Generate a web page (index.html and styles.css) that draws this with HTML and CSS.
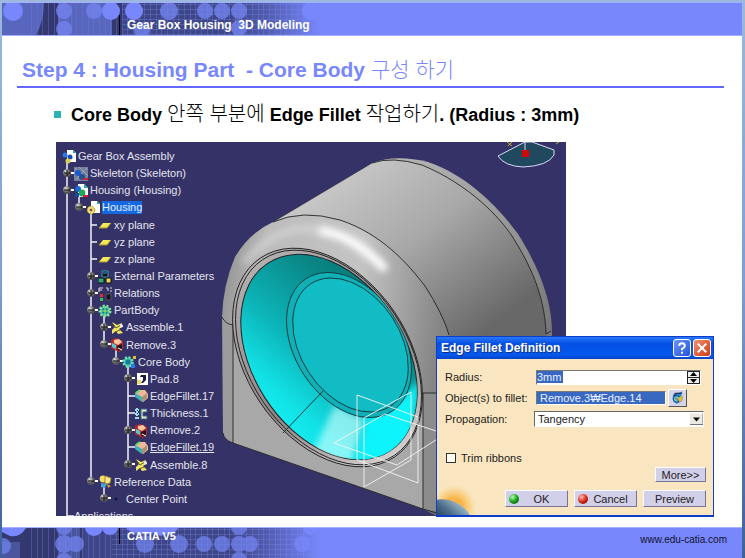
FILE: index.html
```html
<!DOCTYPE html>
<html lang="ko">
<head>
<meta charset="utf-8">
<title>Gear Box Housing 3D Modeling</title>
<link rel="stylesheet" href="styles.css">
</head>
<body>
<svg class="defs" aria-hidden="true">
  <defs>
    <linearGradient id="fade"><stop offset="0" stop-color="#7888fc" stop-opacity="0"/><stop offset=".4" stop-color="#7888fc" stop-opacity=".35"/><stop offset="1" stop-color="#7888fc"/></linearGradient>
    <pattern id="vlines" width="17" height="32" patternUnits="userSpaceOnUse"><path d="M1.5 0V32M6.5 0V32M12.5 0V32" stroke="#7080e8" stroke-opacity=".35"/></pattern>
    <pattern id="hlines" width="20" height="5" patternUnits="userSpaceOnUse"><path d="M0 1.5H20" stroke="#8090f0" stroke-opacity=".3"/></pattern>
    <symbol id="asm" viewBox="0 0 14 14"><path d="M5 0h6l3 3v9H5z" fill="#fff"/><path d="M11 0v3h3z" fill="#2aa"/><circle cx="3" cy="5" r="2.5" fill="#2878e8"/><circle cx="8" cy="7" r="2.5" fill="#1848b0"/><circle cx="6" cy="11" r="2.5" fill="#d8d050"/></symbol>
    <symbol id="skel" viewBox="0 0 14 14"><path d="M0 0h14v14H0z" fill="#77809c"/><path d="M1 1l12 12M5 0l9 9M0 5l8 8M13 1L2 13" stroke="#b8bed0" stroke-dasharray="1 1"/><circle cx="4" cy="6" r="3" fill="#1858d0"/><circle cx="8" cy="10" r="3" fill="#205090"/><path d="M9 11h5v2H9z" fill="#d02030"/></symbol>
    <symbol id="prod" viewBox="0 0 14 14"><path d="M4 0h6l4 4v9H4z" fill="#fff"/><path d="M10 0v4h4z" fill="#2aa"/><circle cx="4" cy="5" r="3" fill="#1868d8"/><circle cx="8" cy="9" r="3.4" fill="#20a858"/><path d="M1 9h4v4H1z" fill="#1848a0"/><path d="M9 11h5v2H9z" fill="#d02030"/></symbol>
    <symbol id="part" viewBox="0 0 14 14"><path d="M5 0h6l3 3v9H5z" fill="#fff"/><path d="M11 0v3h3z" fill="#2aa"/><circle cx="5" cy="9" r="3.8" fill="#f0dc70" stroke="#b09828" stroke-dasharray="2 1"/><circle cx="5" cy="9" r="1.3" fill="#745"/></symbol>
    <symbol id="plane" viewBox="0 0 14 14"><path d="M1 10L5 5h8l-4 5z" fill="#f2e85c"/><path d="M1 10h8l4-5" fill="none" stroke="#a39420"/></symbol>
    <symbol id="param" viewBox="0 0 14 14"><path d="M4 1h6v6H4z" fill="#111" stroke="#38a0b8"/><path d="M0 8h6v5H0z" fill="#37a878" stroke="#111"/><path d="M8 8h5v5H8z" fill="#e4d858" stroke="#111"/><path d="M5 3h4" stroke="#38a0ff"/></symbol>
    <symbol id="rel" viewBox="0 0 14 14"><path d="M1 1h4M1 1v4M1 3h3M8 1h2v3M12 1h2M12 4h2" stroke="#ddd" fill="none"/><path d="M2 7h3v3H2z" fill="#e03030"/><path d="M2 11h3v3H2z" fill="#30c050"/><path d="M8 7h5v6H8z" fill="#15151f" stroke="#556"/></symbol>
    <symbol id="gear" viewBox="0 0 14 14"><circle cx="7" cy="7" r="5.2" fill="#3cc49c" stroke="#8fe0a0" stroke-width="2.6" stroke-dasharray="2 1.6"/><circle cx="7" cy="7" r="3" fill="#1878a0"/><path d="M7 3v8M3 7h8" stroke="#9af060"/></symbol>
    <symbol id="core" viewBox="0 0 14 14"><circle cx="6" cy="7" r="4.6" fill="#3cc49c" stroke="#6fe0b8" stroke-width="2.4" stroke-dasharray="2 1.6"/><circle cx="6" cy="7" r="2.5" fill="#1878a0"/><path d="M11 1h3v3h-3z" fill="#f0b830"/><path d="M9 9h4v4H9z" fill="#2878e8"/></symbol>
    <symbol id="assem" viewBox="0 0 14 14"><path d="M2 1l5 3 5-2v4l-3 2 4 4-5 1-2-3-4 3V9l3-3z" fill="#f0e468"/><path d="M3 3l3 4 5-3M5 11l5-2" stroke="#665d28" fill="none"/><path d="M10 3l3 1v2l-3 1z" fill="#e8e8e8"/></symbol>
    <symbol id="remove" viewBox="0 0 14 14"><path d="M1 2l5-2 7 3v8l-4 3-8-4z" fill="#c02828"/><path d="M4 2l5-1 3 3-4 3-4-2z" fill="#f6c8a0"/><path d="M2 5l4 2v4L2 9z" fill="#55c8d0"/><path d="M7 8l5-2v5l-4 2z" fill="#201420"/><path d="M8 10l4 2" stroke="#fff"/></symbol>
    <symbol id="pad" viewBox="0 0 14 14"><path d="M3 1h11v12H3z" fill="#fff"/><path d="M7 3h5v5l-3 3H7l2-3V5H6z" fill="#1a1a3a"/><path d="M3 8h4v4H3z" fill="#e8d870"/></symbol>
    <symbol id="fillet" viewBox="0 0 14 14"><path d="M1 4l4-3h6l3 4v4l-5 4-8-6z" fill="#efb69a"/><path d="M1 4l7 4v5L1 8z" fill="#3fb0b8"/><path d="M2 4l4-3" stroke="#58e070" stroke-width="2"/><path d="M8 8l5-4v5l-5 4z" fill="#a89470"/></symbol>
    <symbol id="thick" viewBox="0 0 14 14"><path d="M3 1v12M1 3h4M1 7h4M1 11h4" stroke="#9adce8" stroke-width="2" stroke-dasharray="2 1"/><path d="M7 2h6v3H9v4h4v3H7z" fill="#e8eca8" stroke="#38609c"/></symbol>
    <symbol id="ref" viewBox="0 0 14 14"><circle cx="5" cy="4" r="3.4" fill="#f3dc68"/><path d="M7 1l6 2-1 5-5 1z" fill="#f8e98c" stroke="#a8842c"/><path d="M3 8l6 1-2 4-4-1z" fill="#48a0d8"/><path d="M9 9l4 2-3 2z" fill="#d89838"/></symbol>
    <symbol id="dot" viewBox="0 0 14 14"><circle cx="6" cy="7" r="1.3" fill="#12123c"/></symbol>
  </defs>
</svg>

<div class="slide">
  <header class="band band-top">
    <svg class="texture" viewBox="0 0 373 32" aria-hidden="true">
      <path d="M0 0H320V32H0z" fill="#33386e"/>
      <path d="M0 0H42Q42 18 34 32H0zM56 0H110V32H56z" fill="#5966bd"/>
      <path d="M120 0H320V32H120z" fill="#4a549f" opacity=".5"/>
      <path d="M24 0H320V32H24z" fill="url(#vlines)"/><path d="M120 0H320V32H120z" fill="url(#hlines)"/>
      <g fill="#7383ee" opacity=".8"><circle cx="62" cy="8" r="8"/><circle cx="62" cy="26" r="8"/><circle cx="92" cy="8" r="8"/><circle cx="167" cy="8" r="9"/><circle cx="203" cy="8" r="8"/><circle cx="220" cy="8" r="8"/><circle cx="237" cy="8" r="8"/><circle cx="237" cy="25" r="8"/><circle cx="140" cy="27" r="8"/></g>
      <path d="M230 0H320V32H230z" fill="url(#fade)"/>
      <g fill="#7888fc"><circle cx="11" cy="8" r="10"/><circle cx="109" cy="8" r="9"/><circle cx="132" cy="8" r="9"/><circle cx="309" cy="8" r="9"/></g>
    </svg>
    <p class="band-title">Gear Box Housing&nbsp; 3D Modeling</p>
  </header>

  <main>
    <h1>Step 4 : Housing Part&nbsp; - Core Body <span class="ko">구성 하기</span></h1>
    <ul class="points"><li>Core Body <span class="ko">안쪽 부분에</span> Edge Fillet <span class="ko">작업하기</span>. (Radius : 3mm)</li></ul>

    <div class="shot">
      <div class="viewport">
        <svg class="scene" viewBox="56 142 510 374" role="img" aria-label="Housing model">
          <defs>
            <linearGradient id="body" gradientUnits="userSpaceOnUse" x1="350" y1="170" x2="480" y2="335"><stop offset="0" stop-color="#c6c6c6"/><stop offset=".45" stop-color="#a8a8a8"/><stop offset="1" stop-color="#686868"/></linearGradient>
            <linearGradient id="rim" gradientUnits="userSpaceOnUse" x1="400" y1="160" x2="550" y2="330"><stop offset="0" stop-color="#b4b4b4"/><stop offset=".5" stop-color="#999"/><stop offset="1" stop-color="#767676"/></linearGradient>
            <linearGradient id="front" gradientUnits="userSpaceOnUse" x1="225" y1="300" x2="440" y2="330"><stop offset="0" stop-color="#999"/><stop offset=".15" stop-color="#bbb"/><stop offset=".6" stop-color="#c4c4c4"/><stop offset="1" stop-color="#858585"/></linearGradient>
            <linearGradient id="wall" gradientUnits="userSpaceOnUse" x1="300" y1="265" x2="350" y2="455"><stop offset="0" stop-color="#087878"/><stop offset=".2" stop-color="#0a8585"/><stop offset=".55" stop-color="#0cb4b8"/><stop offset=".8" stop-color="#12e2e6"/><stop offset="1" stop-color="#14f4fa"/></linearGradient>
            <linearGradient id="ring" x2="1"><stop offset="0" stop-color="#b4b0b0"/><stop offset=".6" stop-color="#8d8585"/><stop offset="1" stop-color="#d4d0d0"/></linearGradient>
            <filter id="soft" x="-50%" y="-50%" width="200%" height="200%"><feGaussianBlur stdDeviation="3.5"/></filter>
            <clipPath id="hole"><ellipse cx="329" cy="357" rx="112" ry="76" transform="rotate(57 329 357)"/></clipPath>
            <radialGradient id="knob" cx=".35" cy=".3"><stop offset="0" stop-color="#ddd"/><stop offset="1" stop-color="#555"/></radialGradient>
            <g id="minus"><circle r="4" fill="url(#knob)"/><path d="M-3 0H3" stroke="#111"/><path d="M4 0H7" stroke="#fff" stroke-width="2"/></g>
            <g id="plus"><circle r="4" fill="url(#knob)"/><path d="M-3 0H3M0-3V3" stroke="#111"/><path d="M4 0H7" stroke="#fff" stroke-width="2"/></g>
          </defs>
          <path d="M56 142h510v374H56z" fill="#343266"/>
          <path d="M372 163Q395 154 428 162C470 176 502 212 518 234C542 272 552 305 552 332V516H437L423 509L372 300z" fill="url(#rim)"/>
          <path d="M273 222L372 163Q392 156 422 165C470 185 500 218 512 236C535 272 545 302 547 340V516H440L423 509L273 250z" fill="url(#body)"/>
          <path d="M222 317Q223 285 235 257Q249 233 273 222Q302 209 340 220C382 234 408 264 425 286Q443 314 449 335V514L423 509L233 443Q224 440 223 433z" fill="url(#front)"/>
          <path d="M223 317L233 325V443Q224 440 223 433z" fill="#9c9c9c"/>
          <path d="M423 393H449V514L423 509z" fill="#8c8c8c"/>
          <path d="M233 325L423 393V509L233 443z" fill="#a8a8a8"/>
          <path d="M322 231Q352 235 383 267" fill="none" stroke="#fff" stroke-width="9" stroke-linecap="round" filter="url(#soft)"/>
          <path d="M244 263Q280 220 322 231" fill="none" stroke="#ddd" stroke-width="7" opacity=".6" filter="url(#soft)"/>
          <g fill="none" stroke="#222" stroke-width=".9">
            <path d="M273 222Q302 209 340 220C382 234 408 264 425 286Q443 314 449 335"/>
            <path d="M372 163Q392 156 422 165C470 185 500 218 512 236C535 272 545 302 546 334L551 331"/>
            <path d="M273 222L372 163" opacity=".6"/>
            <path d="M222 317Q225 324 233 325V443L423 509V393H437M423 509L440 514M223 433Q224 440 233 443"/>
            <ellipse cx="327.500" cy="357.500" rx="120" ry="81" transform="rotate(56 327.500 357.500)" fill="url(#ring)"/>
            <ellipse cx="328.500" cy="357.500" rx="118" ry="79" transform="rotate(56 328.500 357.500)"/>
          </g>
          <ellipse cx="329" cy="357" rx="112" ry="76" transform="rotate(57 329 357)" fill="url(#wall)" stroke="#222"/>
          <g clip-path="url(#hole)">
            <path d="M335 405L312 455L350 465L366 420z" fill="#c8ffff" opacity=".65" filter="url(#soft)"/>
            <path d="M366 418L355 465L410 455L420 380L405 395z" fill="#10f4fc" filter="url(#soft)"/>
            <g stroke="#123c40" stroke-width=".9">
              <ellipse cx="349" cy="345" rx="79" ry="54" transform="rotate(57 349 345)" fill="#10b0b6"/>
              <ellipse cx="350.500" cy="345" rx="73" ry="50" transform="rotate(57 350.500 345)" fill="#12bcc4"/>
            </g>
          </g>
          <path d="M323 391L283 433" stroke="#123c40"/>
          <path d="M357 395L418 417V483L357 460zM364 418L411 392V460L364 487zM334 443L385 414L445 434L397 465z" fill="none" stroke="#f4f4f4" stroke-width=".9"/>
          <path d="M525 142L498 156Q504 166 523 167Q548 166 554 155V150L532 142z" fill="#20485e" stroke="#dcd8f8"/>
          <path d="M525 142V152" stroke="#dcd8f8"/><path d="M522 150h7v7h-7z" fill="#d00808"/>
          <path d="M507 142l5 4M512 142l-4 4M556 144l3-2" stroke="#b8b038"/>
          <path d="M67 161V516H74M79 194V207M91 212V481M91 225H97M91 242H97M91 259H97M104 315V345M116 349V362M128 366V464M128 396H135M128 413H135M128 447H135M104 486V499" fill="none" stroke="#f2f2f8" stroke-width="1.500"/>
          <use href="#plus" x="67" y="173"/><use href="#minus" x="67" y="190"/><use href="#minus" x="79" y="207"/>
          <use href="#plus" x="91" y="276"/><use href="#plus" x="91" y="293"/><use href="#minus" x="91" y="310"/>
          <use href="#plus" x="104" y="327"/><use href="#minus" x="104" y="344"/><use href="#minus" x="116" y="361"/>
          <use href="#plus" x="128" y="378"/><use href="#plus" x="128" y="430"/><use href="#plus" x="128" y="464"/>
          <use href="#minus" x="91" y="481"/><use href="#plus" x="104" y="498"/>
        </svg>
        <ul class="tree">
          <li class="l0"><svg><use href="#asm"/></svg>Gear Box Assembly</li>
          <li class="l1"><svg><use href="#skel"/></svg>Skeleton (Skeleton)</li>
          <li class="l1"><svg><use href="#prod"/></svg>Housing (Housing)</li>
          <li class="l2"><svg><use href="#part"/></svg><mark>Housing</mark></li>
          <li class="l3"><svg><use href="#plane"/></svg>xy plane</li>
          <li class="l3"><svg><use href="#plane"/></svg>yz plane</li>
          <li class="l3"><svg><use href="#plane"/></svg>zx plane</li>
          <li class="l3"><svg><use href="#param"/></svg>External Parameters</li>
          <li class="l3"><svg><use href="#rel"/></svg>Relations</li>
          <li class="l3"><svg><use href="#gear"/></svg>PartBody</li>
          <li class="l4"><svg><use href="#assem"/></svg>Assemble.1</li>
          <li class="l4"><svg><use href="#remove"/></svg>Remove.3</li>
          <li class="l5"><svg><use href="#core"/></svg>Core Body</li>
          <li class="l6"><svg><use href="#pad"/></svg>Pad.8</li>
          <li class="l6"><svg><use href="#fillet"/></svg>EdgeFillet.17</li>
          <li class="l6"><svg><use href="#thick"/></svg>Thickness.1</li>
          <li class="l6"><svg><use href="#remove"/></svg>Remove.2</li>
          <li class="l6"><svg><use href="#fillet"/></svg><u>EdgeFillet.19</u></li>
          <li class="l6"><svg><use href="#assem"/></svg>Assemble.8</li>
          <li class="l3"><svg><use href="#ref"/></svg>Reference Data</li>
          <li class="l4"><svg><use href="#dot"/></svg>Center Point</li>
          <li class="l1">Applications</li>
        </ul>
      </div>

      <form class="dialog" aria-labelledby="dlg">
        <div class="titlebar">
          <h2 id="dlg">Edge Fillet Definition</h2>
          <button type="button" class="tb help" aria-label="Help"><svg viewBox="0 0 17 17"><path d="M5.500 6.500Q5.500 3.500 8.500 3.500T11.500 6.500Q11.500 8 8.500 9.500V11M8.500 12.500V14.500" fill="none" stroke="#fff" stroke-width="2"/></svg></button>
          <button type="button" class="tb close" aria-label="Close"><svg viewBox="0 0 17 17"><path d="M4 4l9 9M13 4l-9 9" stroke="#fff" stroke-width="2"/></svg></button>
        </div>
        <div class="fields">
          <label for="radius">Radius:</label>
          <div class="spin"><input id="radius" type="text" value="3mm" size="3"><button type="button" aria-label="Step radius"><svg viewBox="0 0 13 13"><path d="M0 0h13v13H0z" fill="#222"/><path d="M1 1h11v5H1zM1 7h11v5H1z" fill="#eee"/><path d="M6.500 1L10 5H3zM6.500 12L10 8H3z" fill="#000"/></svg></button></div>
          <label for="objects">Object(s) to fillet:</label>
          <div class="pick"><input id="objects" type="text" value="Remove.3₩Edge.14" readonly><button type="button" aria-label="Edit selection"><svg viewBox="0 0 18 16"><path d="M4 6Q5 2 9 3L14 1L13 4Q16 8 13 12L8 14Q3 12 4 6z" fill="#2888d0"/><circle cx="8" cy="9" r="3.500" fill="#58c8c0" stroke="#183c90"/><path d="M6 3h8M5 5h3" stroke="#113"/><path d="M10 8l4-3v5l-3 3z" fill="#e8b828"/><path d="M7 8l3 3" stroke="#d02828"/></svg></button></div>
          <label for="prop">Propagation:</label>
          <div class="choose"><select id="prop"><option>Tangency</option></select><svg viewBox="0 0 13 11" aria-hidden="true"><path d="M0 0h13v11H0z" fill="#ece9e0"/><path d="M13 0v11H0" fill="none" stroke="#777"/><path d="M3 4h7L6.500 8z"/></svg></div>
        </div>
        <label class="trim"><input type="checkbox">Trim ribbons</label>
        <div class="row"><button type="button" class="btn more">More&gt;&gt;</button></div>
        <div class="row"><button type="button" class="btn"><i class="led green"></i><span>OK</span></button><button type="button" class="btn"><i class="led red"></i><span>Cancel</span></button><button type="button" class="btn"><span>Preview</span></button></div>
        <svg class="planet" viewBox="0 0 40 34" aria-hidden="true"><defs><radialGradient id="glow"><stop offset=".4" stop-color="#f8a828" stop-opacity=".8"/><stop offset="1" stop-color="#f8c050" stop-opacity="0"/></radialGradient><linearGradient id="globe" x1=".7" y1="0" x2=".3" y2="1"><stop offset="0" stop-color="#9fb8c8"/><stop offset=".4" stop-color="#4a6c88"/><stop offset="1" stop-color="#101c30"/></linearGradient></defs><circle cx="17" cy="26" r="22" fill="url(#glow)"/><ellipse cx="12" cy="36" rx="24" ry="16" transform="rotate(25 12 36)" fill="url(#globe)"/></svg>
      </form>
    </div>
  </main>

  <footer class="band band-bottom">
    <svg class="texture" viewBox="0 0 373 32" aria-hidden="true">
      <path d="M0 0H320V32H0z" fill="#33386e"/>
      <path d="M0 14H18V32H0zM56 0H78V32H56z" fill="#4a559f"/>
      <path d="M80 0H320V32H80z" fill="#4a549f" opacity=".5"/>
      <path d="M24 0H320V32H24z" fill="url(#vlines)"/><path d="M110 0H320V32H110z" fill="url(#hlines)"/>
      <g fill="#7383ee" opacity=".75"><circle cx="1" cy="18" r="8"/><circle cx="62" cy="-1" r="8"/><circle cx="62" cy="16" r="9"/><circle cx="74" cy="16" r="8"/><circle cx="62" cy="33" r="8"/><circle cx="143" cy="16" r="9"/><circle cx="177" cy="16" r="9"/><circle cx="202" cy="16" r="8"/><circle cx="220" cy="16" r="8"/><circle cx="237" cy="-1" r="8"/><circle cx="237" cy="16" r="8"/><circle cx="248" cy="16" r="8"/><circle cx="237" cy="32" r="8"/><circle cx="300" cy="16" r="8"/></g>
      <path d="M230 0H320V32H230z" fill="url(#fade)"/>
      <g fill="#7888fc"><path d="M0 0H24Q18 10 8 8L0 4z"/><circle cx="92" cy="-1" r="9"/><circle cx="108" cy="-1" r="8"/><path d="M124 0h52q-4 8-12 6-6 4-12-1-20 4-28-5z"/><circle cx="309" cy="-1" r="8"/></g>
    </svg>
    <p class="band-title">CATIA V5</p>
    <a href="#">www.edu-catia.com</a>
  </footer>
</div>
</body>
</html>
```
FILE: styles.css
```css
* { box-sizing: border-box; }

body {
  margin: 0;
  min-height: 100vh;
  padding: 2px 3px 0 2px;
  background: linear-gradient(#9cb8dc, #7ca0d0 50%, #3c6098);
  font-family: "Liberation Sans", "Noto Sans CJK KR", sans-serif;
  display: flex;
}

h1, h2, p, ul { margin: 0; padding: 0; }
ul { list-style: none; }
.defs { position: absolute; width: 0; height: 0; }

.slide {
  flex: 1;
  background: #fff;
  display: flex;
  flex-direction: column;
}

.ko {
  font-family: "Noto Sans CJK KR", sans-serif;
  font-weight: 300;
  line-height: 1;
}

/* Header and footer bands */
.band {
  position: relative;
  display: flex;
  background: #7888fc;
  color: #fff;
  border-top: 1px solid #a4b0ff;
  padding-left: 117px;
  overflow: hidden;
}
.band-top { height: 34px; border-bottom: 1px solid #a4b0ff; align-items: flex-end; }
.band-bottom { height: 31px; align-items: flex-start; justify-content: space-between; }
.texture { position: absolute; left: 0; top: 0; width: 373px; height: 32px; }
.band-title {
  position: relative;
  padding-left: 7px;
  border-left: 1px solid #000;
  font-size: 12px;
  font-weight: bold;
  line-height: 20px;
}
.band-bottom .band-title { font-size: 11px; line-height: 16px; }
.band a {
  position: relative;
  padding: 4px 15px 0 0;
  color: #101030;
  font-size: 10px;
  line-height: 16px;
  text-decoration: none;
}

/* Slide content */
main { flex: 1; }
h1 {
  margin: 18px 18px 0 15px;
  padding: 0 5px;
  border-bottom: 2px solid #6468fa;
  color: #7888fc;
  font-size: 21px;
  line-height: 32px;
  white-space: nowrap;
}
.points li {
  margin: 14px 0 0 52px;
  font-size: 18px;
  font-weight: bold;
  line-height: 26px;
  white-space: nowrap;
}
.points .ko { font-size: 20px; }
.points li::before {
  content: "";
  display: inline-block;
  width: 7px;
  height: 7px;
  margin-right: 10px;
  background: #2cb4b4;
  vertical-align: 3px;
}

.shot { position: relative; width: 658px; margin: 14px 0 0 54px; }
.viewport { position: relative; width: 510px; height: 374px; overflow: hidden; }
.scene { display: block; width: 100%; height: 100%; }

/* Specification tree */
.tree {
  position: absolute;
  inset: 6px auto auto 0;
  height: 377px;
  display: grid;
  grid-auto-rows: minmax(0, 1fr);
  color: #e4e4ee;
  font-size: 11px;
  line-height: 17px;
  white-space: nowrap;
}
.tree li { display: flex; align-items: center; gap: 2px; }
.tree svg { width: 14px; height: 14px; }
.tree mark { background: #1668e0; color: #e4eeff; line-height: 13px; }
.l0 { padding-left: 6px; }
.l1 { padding-left: 18px; }
.l2 { padding-left: 30px; }
.l3 { padding-left: 42px; }
.l4 { padding-left: 54px; }
.l5 { padding-left: 66px; }
.l6 { padding-left: 78px; }

/* Dialog */
.dialog {
  position: absolute;
  left: 380px;
  top: 194px;
  width: 278px;
  border: 1px solid #0c3cc8;
  border-bottom-width: 2px;
  background: #f9e6c0;
  color: #222;
  font-size: 11px;
}
.dialog input, .dialog select, .dialog button { font: inherit; color: inherit; margin: 0; }
.titlebar {
  display: flex;
  align-items: center;
  gap: 2px;
  height: 22px;
  padding: 0 2px 0 4px;
  background: linear-gradient(#2878f8, #0450e4 30%, #0458ee 80%, #0444c8);
  color: #fff;
}
.titlebar h2 { flex: 1; font-size: 12px; text-shadow: 1px 1px #103080; }
.tb { width: 18px; height: 18px; padding: 0; border: 1px solid #fff; border-radius: 3px; }
.tb svg { display: block; width: 16px; height: 16px; }
.help { background: linear-gradient(135deg, #6c94f4, #2454d8); }
.close { background: linear-gradient(135deg, #f09070, #d03c14); }

.fields {
  display: grid;
  grid-template-columns: 90px 1fr;
  grid-auto-rows: 18px;
  row-gap: 3px;
  align-items: center;
  padding: 9px 9px 0 8px;
}
.spin, .pick, .choose { display: flex; align-items: center; }
.spin { height: 15px; background: #fff; border: 1px solid #777; border-color: #777 #fff #fff #777; margin: 0 3px 0 1px; justify-content: space-between; }
.spin input { width: 26px; height: 12px; padding: 0; border: 0; background: #3868c0; }
.dialog .spin input, .dialog .pick input { color: #e8f0ff; }
.spin button { width: 13px; height: 13px; padding: 0; border: 0; }
.spin svg { display: block; width: 13px; height: 13px; }
.pick { gap: 2px; margin-left: 1px; }
.pick input { width: 130px; height: 14px; padding: 0 3px; border: 1px solid; border-color: #777 #fff #fff #777; background: #3868c0; }
.pick button { width: 19px; height: 18px; padding: 0; border: 1px solid; border-color: #fff #555 #555 #fff; background: #d8d4e8; }
.pick svg { display: block; width: 17px; height: 16px; }
.choose { position: relative; height: 16px; margin-left: -1px; background: #fff; border: 1px solid; border-color: #666 #fff #fff #666; }
.choose select { flex: 1; height: 14px; padding: 0 3px; border: 0; background: none; appearance: none; }
.choose svg { position: absolute; right: 0; top: 1px; width: 13px; height: 12px; pointer-events: none; }

.trim { display: flex; align-items: center; gap: 5px; margin: 21px 0 0 9px; line-height: 18px; }
.trim input { appearance: none; width: 10px; height: 10px; border: 1px solid #333; background: #fffdf0; }
.row { position: relative; z-index: 1; display: flex; justify-content: flex-end; gap: 6px; padding: 0 7px 8px 0; }
.btn {
  display: flex;
  align-items: center;
  width: 63px;
  height: 17px;
  padding: 0 3px;
  border: 1px solid;
  border-color: #fff #77749a #77749a #fff;
  background: #d2cfe8;
}
.btn span { flex: 1; text-align: center; }
.more { width: 51px; height: 15px; justify-content: center; }
.led { width: 10px; height: 10px; border-radius: 50%; }
.green { background: radial-gradient(circle at 35% 30%, #b0ffb0, #18a018 50%, #064806); }
.red { background: radial-gradient(circle at 35% 30%, #ffc0b0, #d82818 50%, #600808); }
.planet { position: absolute; left: 0; bottom: 0; width: 40px; height: 34px; }
```
